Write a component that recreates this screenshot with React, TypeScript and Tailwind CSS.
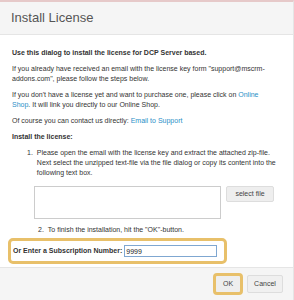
import { useState } from "react";

export default function App() {
  const [sub, setSub] = useState("9999");

  return (
    <div className="h-[300px] w-[294px] overflow-hidden bg-white font-['Liberation_Sans',Arial,sans-serif] text-[#333]">
      <div className="flex h-full flex-col border-t-2 border-r border-[#e6c9c9] border-r-[#e5e5e5]">
        {/* Header */}
        <div className="flex h-[33px] items-center border-b border-[#e5e5e5] bg-[#f5f5f5] px-[11px]">
          <h1 className="text-[13px] text-[#555]">Install License</h1>
        </div>

        {/* Body */}
        <div className="flex-1 pl-[12px] pr-[26px] pt-[13px] text-[7px] leading-[10px]">
          <p className="font-bold">Use this dialog to install the license for DCP Server based.</p>
          <p className="mt-[6px]">
            If you already have received an email with the license key form "support@mscrm-addons.com", please follow the steps below.
          </p>
          <p className="mt-[6px]">
            If you don't have a license yet and want to purchase one, please click on{" "}
            <span className="text-[#2a8fc7]">Online Shop</span>. It will link you directly to our Online Shop.
          </p>
          <p className="mt-[6px]">
            Of course you can contact us directly: <span className="text-[#2a8fc7]">Email to Support</span>
          </p>
          <p className="mt-[6px] font-bold">Install the license:</p>
          <ol className="-mr-[14px] mt-[6px] pl-[22px]">
            <li className="flex gap-[4px]">
              <span className="-ml-[7px]">1.</span>
              <span>
                Please open the email with the license key and extract the attached zip-file. Next select the unzipped text-file via the file dialog or copy its content into the following text box.
              </span>
            </li>
          </ol>
          <div className="mt-[8px] flex items-start gap-[5px] pl-[22px]">
            <textarea className="h-[33px] w-[187px] shrink-0 resize-none border border-[#ccc] bg-white" />
            <button className="h-[16px] w-[48px] shrink-0 rounded-[2px] border border-[#ddd] bg-[#eee] text-[7px] text-[#444]">
              select file
            </button>
          </div>
          <div className="mt-[6px] flex gap-[4px] pl-[26px]">
            <span>2.</span>
            <span>To finish the installation, hit the "OK"-button.</span>
          </div>
          <div className="-ml-[4px] mt-[3px] flex h-[26px] w-[219px] items-center gap-[2px] rounded-[5px] border-[3px] border-[#e8c06a] pl-[2px]">
            <span className="font-bold">Or Enter a Subscription Number:</span>
            <input
              value={sub}
              onChange={(e) => setSub(e.target.value)}
              className="h-[12px] w-[93px] border border-[#7fa7d1] px-[1px] text-[7px] text-[#222] outline-none"
            />
          </div>
        </div>

        {/* Footer */}
        <div className="flex h-[33px] items-center justify-end gap-[4px] border-t border-[#e5e5e5] bg-[#f5f5f5] pr-[10px]">
          <button className="h-[22px] w-[30px] rounded-[4px] border-[3px] border-[#e8c06a] bg-[#eee] text-[7px] text-[#444]">
            OK
          </button>
          <button className="h-[18px] w-[36px] rounded-[2px] border border-[#ddd] bg-[#f0f0f0] text-[7px] text-[#444]">
            Cancel
          </button>
        </div>
      </div>
    </div>
  );
}
